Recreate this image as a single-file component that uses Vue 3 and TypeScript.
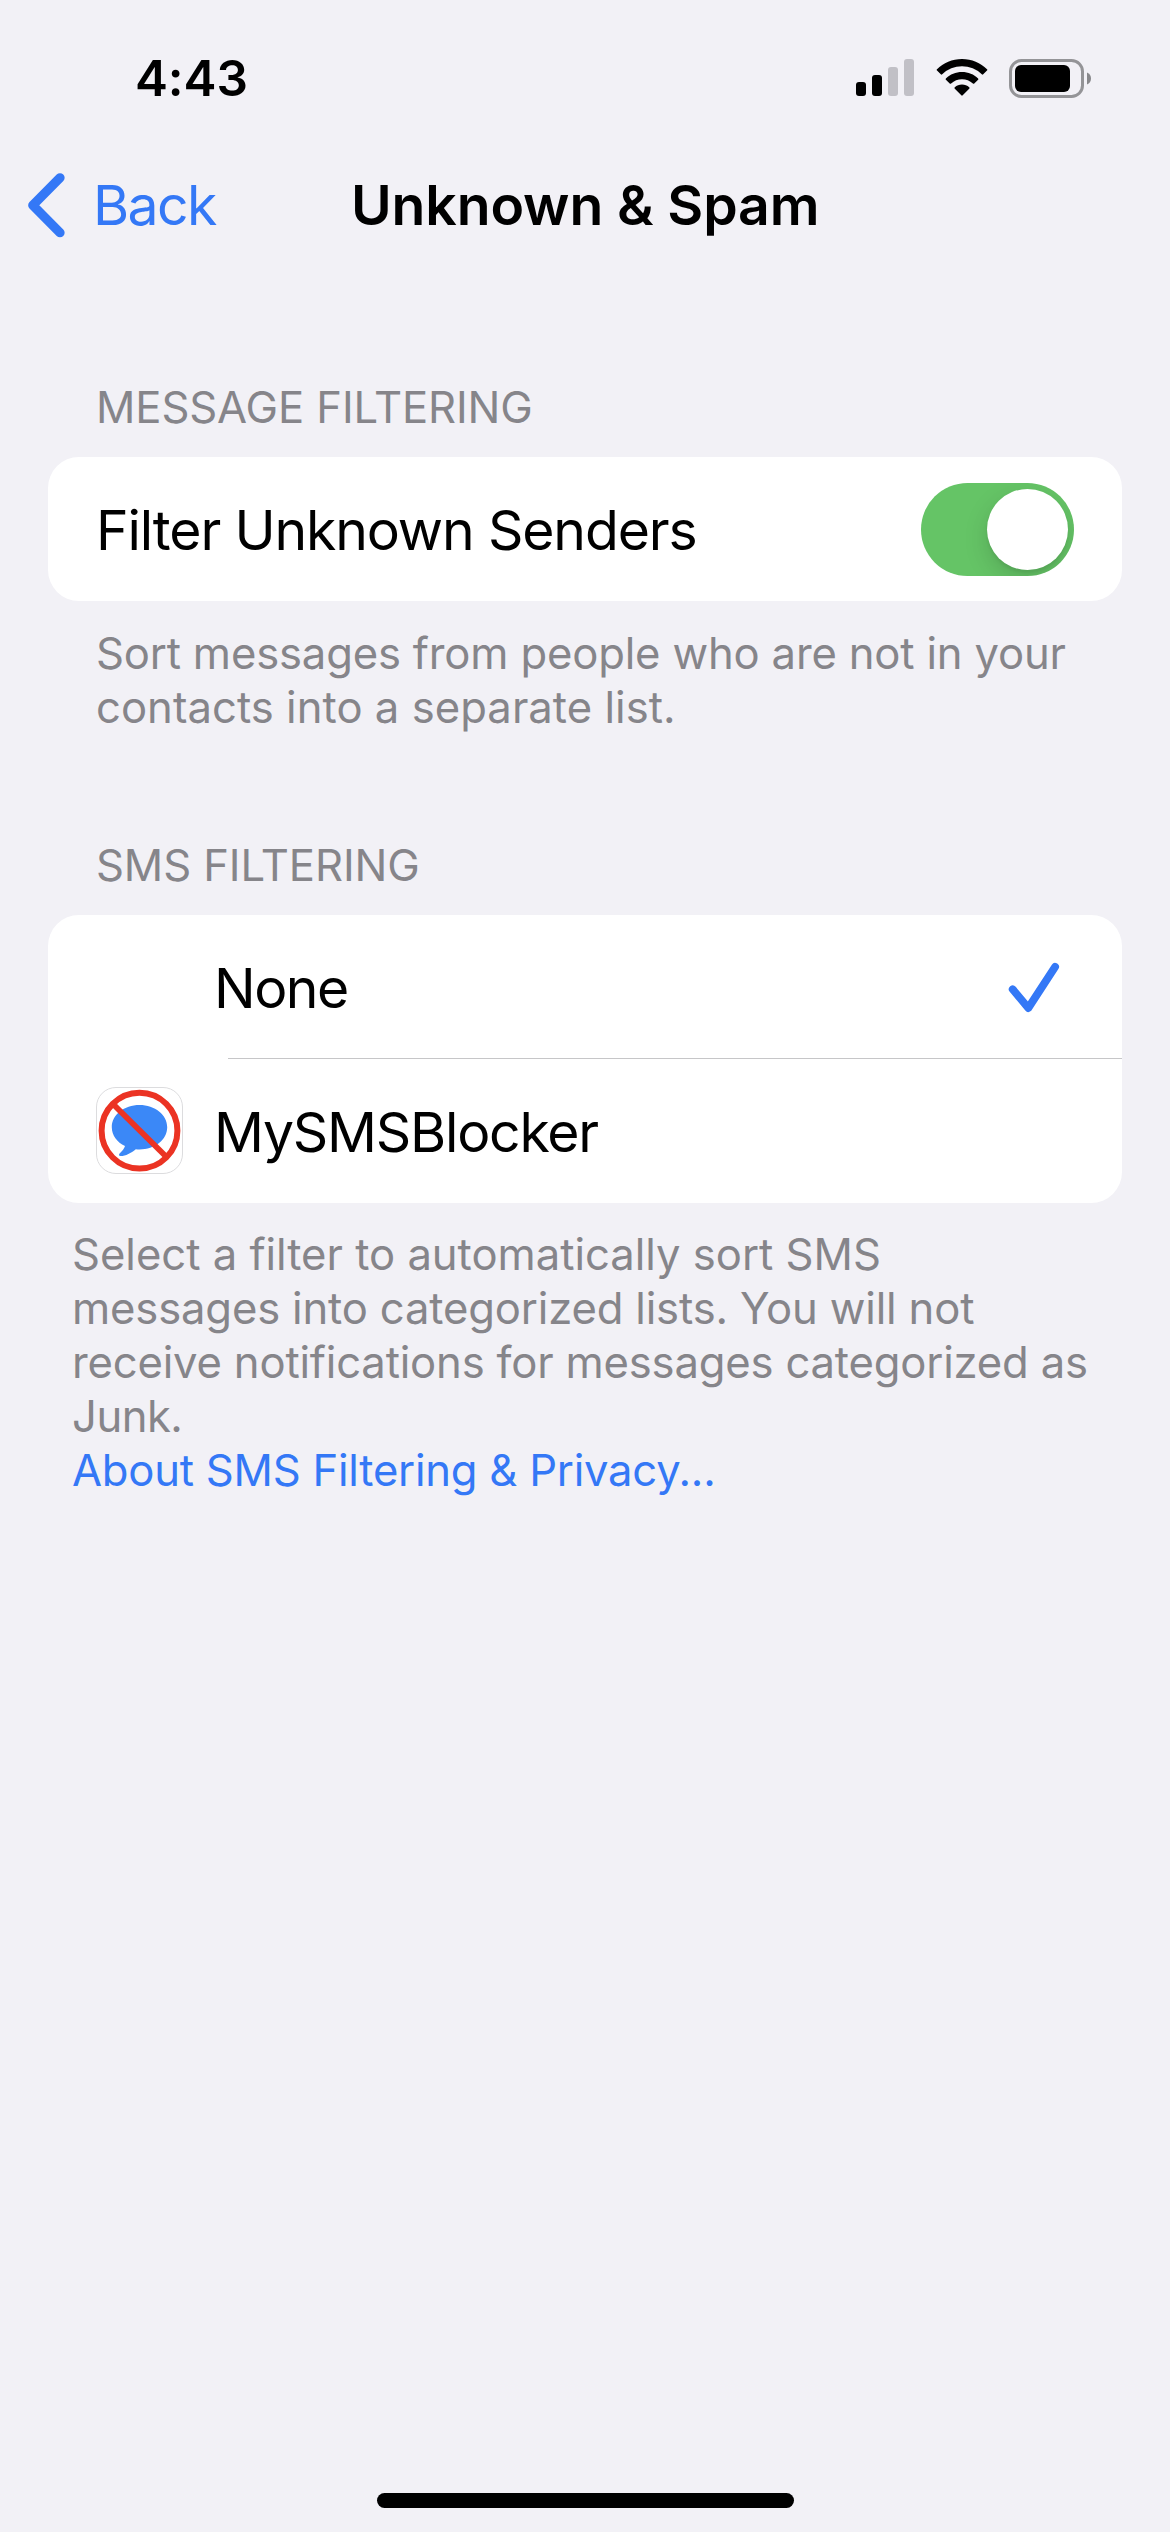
<script setup lang="ts">
import { ref } from 'vue'

interface TextLine {
  text: string
  tracking: number
}

interface FilterOption {
  id: string
  label: string
  hasIcon: boolean
  tracking: number
}

const filterUnknown = ref(true)
const selected = ref('none')

const signal = [
  { height: 14, on: true },
  { height: 21, on: true },
  { height: 29, on: false },
  { height: 37, on: false },
]

const messageNote: TextLine[] = [
  { text: 'Sort messages from people who are not in your', tracking: -0.17 },
  { text: 'contacts into a separate list.', tracking: 0.04 },
]

const smsNote: TextLine[] = [
  { text: 'Select a filter to automatically sort SMS', tracking: -0.01 },
  { text: 'messages into categorized lists. You will not', tracking: -0.16 },
  { text: 'receive notifications for messages categorized as', tracking: -0.18 },
  { text: 'Junk.', tracking: -0.5 },
]

const options: FilterOption[] = [
  { id: 'none', label: 'None', hasIcon: false, tracking: -1.5 },
  { id: 'mysmsblocker', label: 'MySMSBlocker', hasIcon: true, tracking: -1.23 },
]
</script>

<template>
  <div class="screen">
    <header class="status">
      <span class="time">4:43</span>
      <div class="indicators">
        <div class="signal">
          <i
            v-for="bar in signal"
            :key="bar.height"
            :class="{ on: bar.on }"
            :style="{ height: bar.height + 'px' }"
          ></i>
        </div>
        <svg class="wifi" width="52" height="38" viewBox="0 0 52 38">
          <path d="M26 0C35.8 0 44.6 3.900 51 10.200a1 1 0 0 1 0 1.400L47.200 15.300a1 1 0 0 1-1.400 0A28.500 28.500 0 0 0 6.200 15.300a1 1 0 0 1-1.400 0L1 11.600a1 1 0 0 1 0-1.400C7.400 3.900 16.200 0 26 0Z" />
          <path d="M26 13C32.200 13 37.900 15.400 42.100 19.400a1 1 0 0 1 0 1.400L38.300 24.500a1 1 0 0 1-1.400 0A16 16 0 0 0 15.100 24.500a1 1 0 0 1-1.400 0L9.900 20.800a1 1 0 0 1 0-1.400C14.100 15.400 19.800 13 26 13Z" />
          <path d="M26 25.500C28.800 25.500 31.300 26.500 33.200 28.200a1 1 0 0 1 0 1.500L26.700 36.300a1 1 0 0 1-1.400 0L18.800 29.700a1 1 0 0 1 0-1.500C20.700 26.500 23.200 25.500 26 25.500Z" />
        </svg>
        <svg class="battery" width="82" height="39" viewBox="0 0 82 39">
          <rect x="1.500" y="1.500" width="72" height="36" rx="11" fill="none" stroke="#949497" stroke-width="3" />
          <rect x="6" y="6" width="55" height="27" rx="6" />
          <path d="M78 13.500C80.500 14.500 82 16.800 82 19.500C82 22.200 80.500 24.500 78 25.500Z" fill="#88888b" />
        </svg>
      </div>
    </header>

    <nav class="nav">
      <a class="back">
        <svg width="40" height="66" viewBox="0 0 40 66">
          <path d="M35 5.800L7.800 33.300L35 60.700" fill="none" stroke="#3478f6" stroke-width="9.300" stroke-linecap="round" stroke-linejoin="round" />
        </svg>
        <span>Back</span>
      </a>
      <h1>Unknown &amp; Spam</h1>
    </nav>

    <main>
      <section>
        <h2>MESSAGE FILTERING</h2>
        <div class="card">
          <div class="row">
            <span class="label toggle-label">Filter Unknown Senders</span>
            <button
              class="switch"
              :class="{ on: filterUnknown }"
              role="switch"
              :aria-checked="filterUnknown"
              @click="filterUnknown = !filterUnknown"
            >
              <span class="knob"></span>
            </button>
          </div>
        </div>
        <p class="note">
          <span v-for="line in messageNote" :key="line.text" :style="{ letterSpacing: line.tracking + 'px' }">{{ line.text }}</span>
        </p>
      </section>

      <section>
        <h2>SMS FILTERING</h2>
        <div class="card">
          <div v-for="option in options" :key="option.id" class="row option" @click="selected = option.id">
            <div class="slot">
              <svg v-if="option.hasIcon" width="87" height="87" viewBox="0 0 87 87">
                <rect x="0.500" y="0.500" width="86" height="86" rx="19.500" fill="#fff" stroke="#dcdcde" />
                <path d="M43.500 18C58.900 18 71.200 27.800 71.200 40.200C71.200 52.600 58.900 62.400 43.500 62.400C42.200 62.400 41 62.400 39.800 62.200C35 66 29.800 69 24.600 69C22.800 69 22.500 67.500 23.800 66.200C26.200 63.900 28.400 61.200 29 58.900C21 55.300 15.800 48.300 15.800 40.200C15.800 27.800 28.100 18 43.500 18Z" fill="#3b88f7" />
                <path d="M17.500 17.500L69.500 69" stroke="#eb3323" stroke-width="5.800" />
                <circle cx="43.500" cy="43.700" r="37.900" fill="none" stroke="#eb3323" stroke-width="6" />
              </svg>
            </div>
            <span class="label" :style="{ letterSpacing: option.tracking + 'px' }">{{ option.label }}</span>
            <svg v-if="selected === option.id" class="check" width="52" height="52" viewBox="0 0 52 52">
              <path d="M4.700 27.300L20.300 46L47.100 4.800" fill="none" stroke="#3478f6" stroke-width="7.800" stroke-linecap="round" stroke-linejoin="round" />
            </svg>
          </div>
        </div>
        <p class="note wide">
          <span v-for="line in smsNote" :key="line.text" :style="{ letterSpacing: line.tracking + 'px' }">{{ line.text }}</span>
          <a>About SMS Filtering &amp; Privacy...</a>
        </p>
      </section>
    </main>

    <div class="home"></div>
  </div>
</template>

<style>
body {
  background: #f2f1f6;
}
</style>

<style scoped>
.screen {
  display: flex;
  flex-direction: column;
  box-sizing: border-box;
  width: 1170px;
  height: 2532px;
  overflow: hidden;
  background: #f2f1f6;
  color: #000;
  font-family: Inter, "Liberation Sans", sans-serif;
}

.status {
  display: flex;
  align-items: center;
  justify-content: space-between;
  height: 156px;
  padding: 0 79px 0 135px;
}

.time {
  font-size: 49.5px;
  font-weight: 600;
  line-height: 60px;
  letter-spacing: -0.1px;
}

.indicators {
  display: flex;
  align-items: flex-end;
}

.signal {
  display: flex;
  align-items: flex-end;
  gap: 6px;
  margin: 0 22px 2px 0;
}

.signal i {
  width: 10px;
  border-radius: 3px;
  background: #c1c0c6;
}

.signal i.on {
  background: #000;
}

.wifi {
  margin: 0 21px 1px 0;
}

.nav {
  display: flex;
  align-items: center;
  height: 98px;
}

.nav span,
h1 {
  font-size: 55.3px;
  line-height: 66px;
  white-space: nowrap;
}

.back {
  display: flex;
  align-items: center;
  box-sizing: border-box;
  width: 351px;
  padding-left: 25px;
  gap: 28px;
  color: #3478f6;
}

.back span {
  letter-spacing: -1.6px;
}

h1 {
  margin: 0;
  font-weight: 600;
  letter-spacing: -0.11px;
}

main {
  flex: 1;
  padding: 127px 48px 0;
}

section + section {
  margin-top: 104px;
}

h2 {
  margin: 0 0 22px;
  padding-left: 48px;
  color: #86858a;
  font-size: 43.6px;
  font-weight: 400;
  line-height: 54px;
  letter-spacing: -0.1px;
}

.card {
  overflow: hidden;
  border-radius: 31px;
  background: #fff;
}

.row {
  display: flex;
  align-items: center;
  box-sizing: border-box;
  height: 144px;
  padding: 0 48px;
}

.label {
  flex: 1;
  padding-top: 2px;
  font-size: 55.3px;
  line-height: 66px;
}

.toggle-label {
  letter-spacing: -1.13px;
}

.switch {
  display: flex;
  box-sizing: border-box;
  width: 153px;
  height: 93px;
  padding: 6px;
  border: 0;
  border-radius: 47px;
  overflow: hidden;
  background: #e9e9ea;
}

.switch.on {
  justify-content: flex-end;
  background: #65c466;
}

.knob {
  width: 81px;
  height: 81px;
  border-radius: 50%;
  background: #fff;
  box-shadow: 0 9px 24px rgba(0, 0, 0, 0.15), 0 3px 3px rgba(0, 0, 0, 0.06);
}

.option + .option {
  background: linear-gradient(#c6c6c8, #c6c6c8) right top / 894px 1px no-repeat;
  height: 145px;
  margin-top: -1px;
}

.slot {
  width: 118px;
  height: 87px;
}

.slot svg {
  display: block;
}

.check {
  margin: 2px 14px 0 0;
}

.note {
  display: flex;
  flex-direction: column;
  margin: 26px 0 0;
  padding-left: 48px;
  color: #86858a;
  font-size: 43.6px;
  line-height: 54px;
  white-space: nowrap;
}

.note.wide {
  margin-top: 25px;
  padding-left: 24px;
}

.note a {
  color: #3478f6;
  letter-spacing: -0.23px;
}

.home {
  width: 417px;
  height: 15px;
  margin: 0 auto 24px;
  border-radius: 8px;
  background: #000;
}
</style>
